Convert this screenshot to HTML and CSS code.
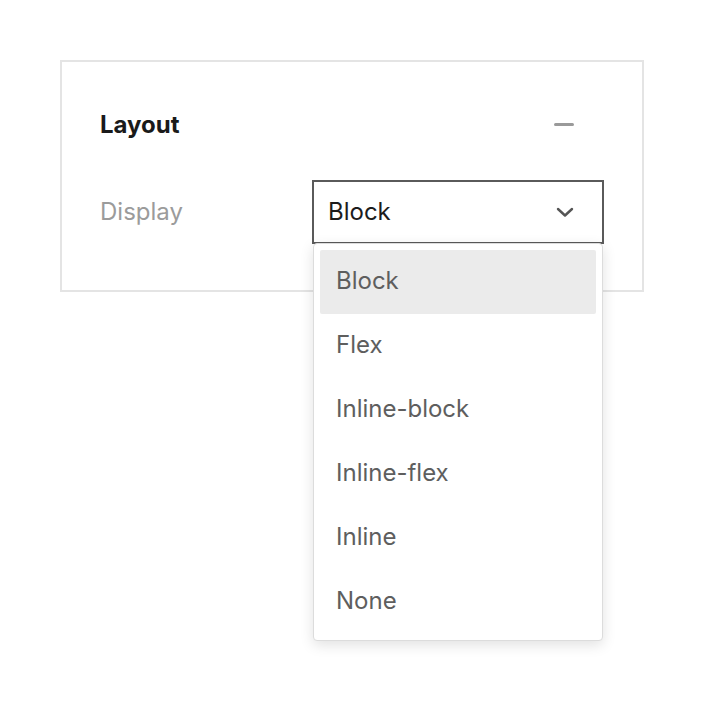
FILE: index.html
```html
<!DOCTYPE html>
<html>
<head>
<meta charset="utf-8">
<link rel="stylesheet" href="styles.css">
</head>
<body>
<div class="panel">
  <div class="panel-header">
    <span class="panel-title">Layout</span>
    <span class="collapse-icon"></span>
  </div>
  <div class="field-row">
    <span class="field-label">Display</span>
    <div class="select">
      <div class="select-value">
        <span>Block</span>
        <svg class="chevron" width="20" height="12" viewBox="0 0 20 12"><path d="M3 3 L10 9.5 L17 3" fill="none" stroke="#555" stroke-width="2.4" stroke-linecap="round" stroke-linejoin="round"/></svg>
      </div>
      <ul class="menu">
        <li class="option active">Block</li>
        <li class="option">Flex</li>
        <li class="option">Inline-block</li>
        <li class="option">Inline-flex</li>
        <li class="option">Inline</li>
        <li class="option">None</li>
      </ul>
    </div>
  </div>
</div>
</body>
</html>
```
FILE: styles.css
```css
* { box-sizing: border-box; }
html { height: 100%; }
body {
  margin: 0;
  padding: 60px;
  background: #fff;
  font-family: Inter, "Noto Sans", sans-serif;
  min-height: 708px;
}
.panel {
  width: 584px;
  border: 2px solid #e4e4e4;
  padding: 38px 38px 46px;
}
.panel-header {
  height: 48px;
  display: flex;
  align-items: center;
  justify-content: space-between;
  margin-bottom: 32px;
}
.panel-title {
  font-size: 24px;
  font-weight: 700;
  color: #1a1a1a;
}
.collapse-icon {
  width: 20px;
  height: 3px;
  border-radius: 2px;
  background: #9a9a9a;
  margin-right: 30px;
}
.field-row {
  display: flex;
  align-items: center;
  justify-content: space-between;
}
.field-label {
  font-size: 24px;
  color: #9b9b9b;
  padding-bottom: 2px;
}
.select {
  position: relative;
  width: 292px;
}
.select-value {
  height: 64px;
  border: 2px solid #5a5a5a;
  display: flex;
  align-items: center;
  justify-content: space-between;
  padding: 0 27px 2px 14px;
  font-size: 24px;
  color: #1c1c1c;
}
.chevron { display: block; margin-top: 2px; }
.menu {
  position: absolute;
  top: 63px;
  left: 1px;
  right: 1px;
  margin: 0;
  padding: 6px;
  list-style: none;
  background: #fff;
  border: 1px solid #dcdcdc;
  border-radius: 4px;
  box-shadow: 0 4px 14px rgba(0,0,0,0.12);
}
.option {
  height: 64px;
  display: flex;
  align-items: center;
  padding: 0 16px 3px;
  font-size: 24px;
  color: #5e5e5e;
}
.option.active {
  background: #ebebeb;
  border-radius: 2px;
}
```
